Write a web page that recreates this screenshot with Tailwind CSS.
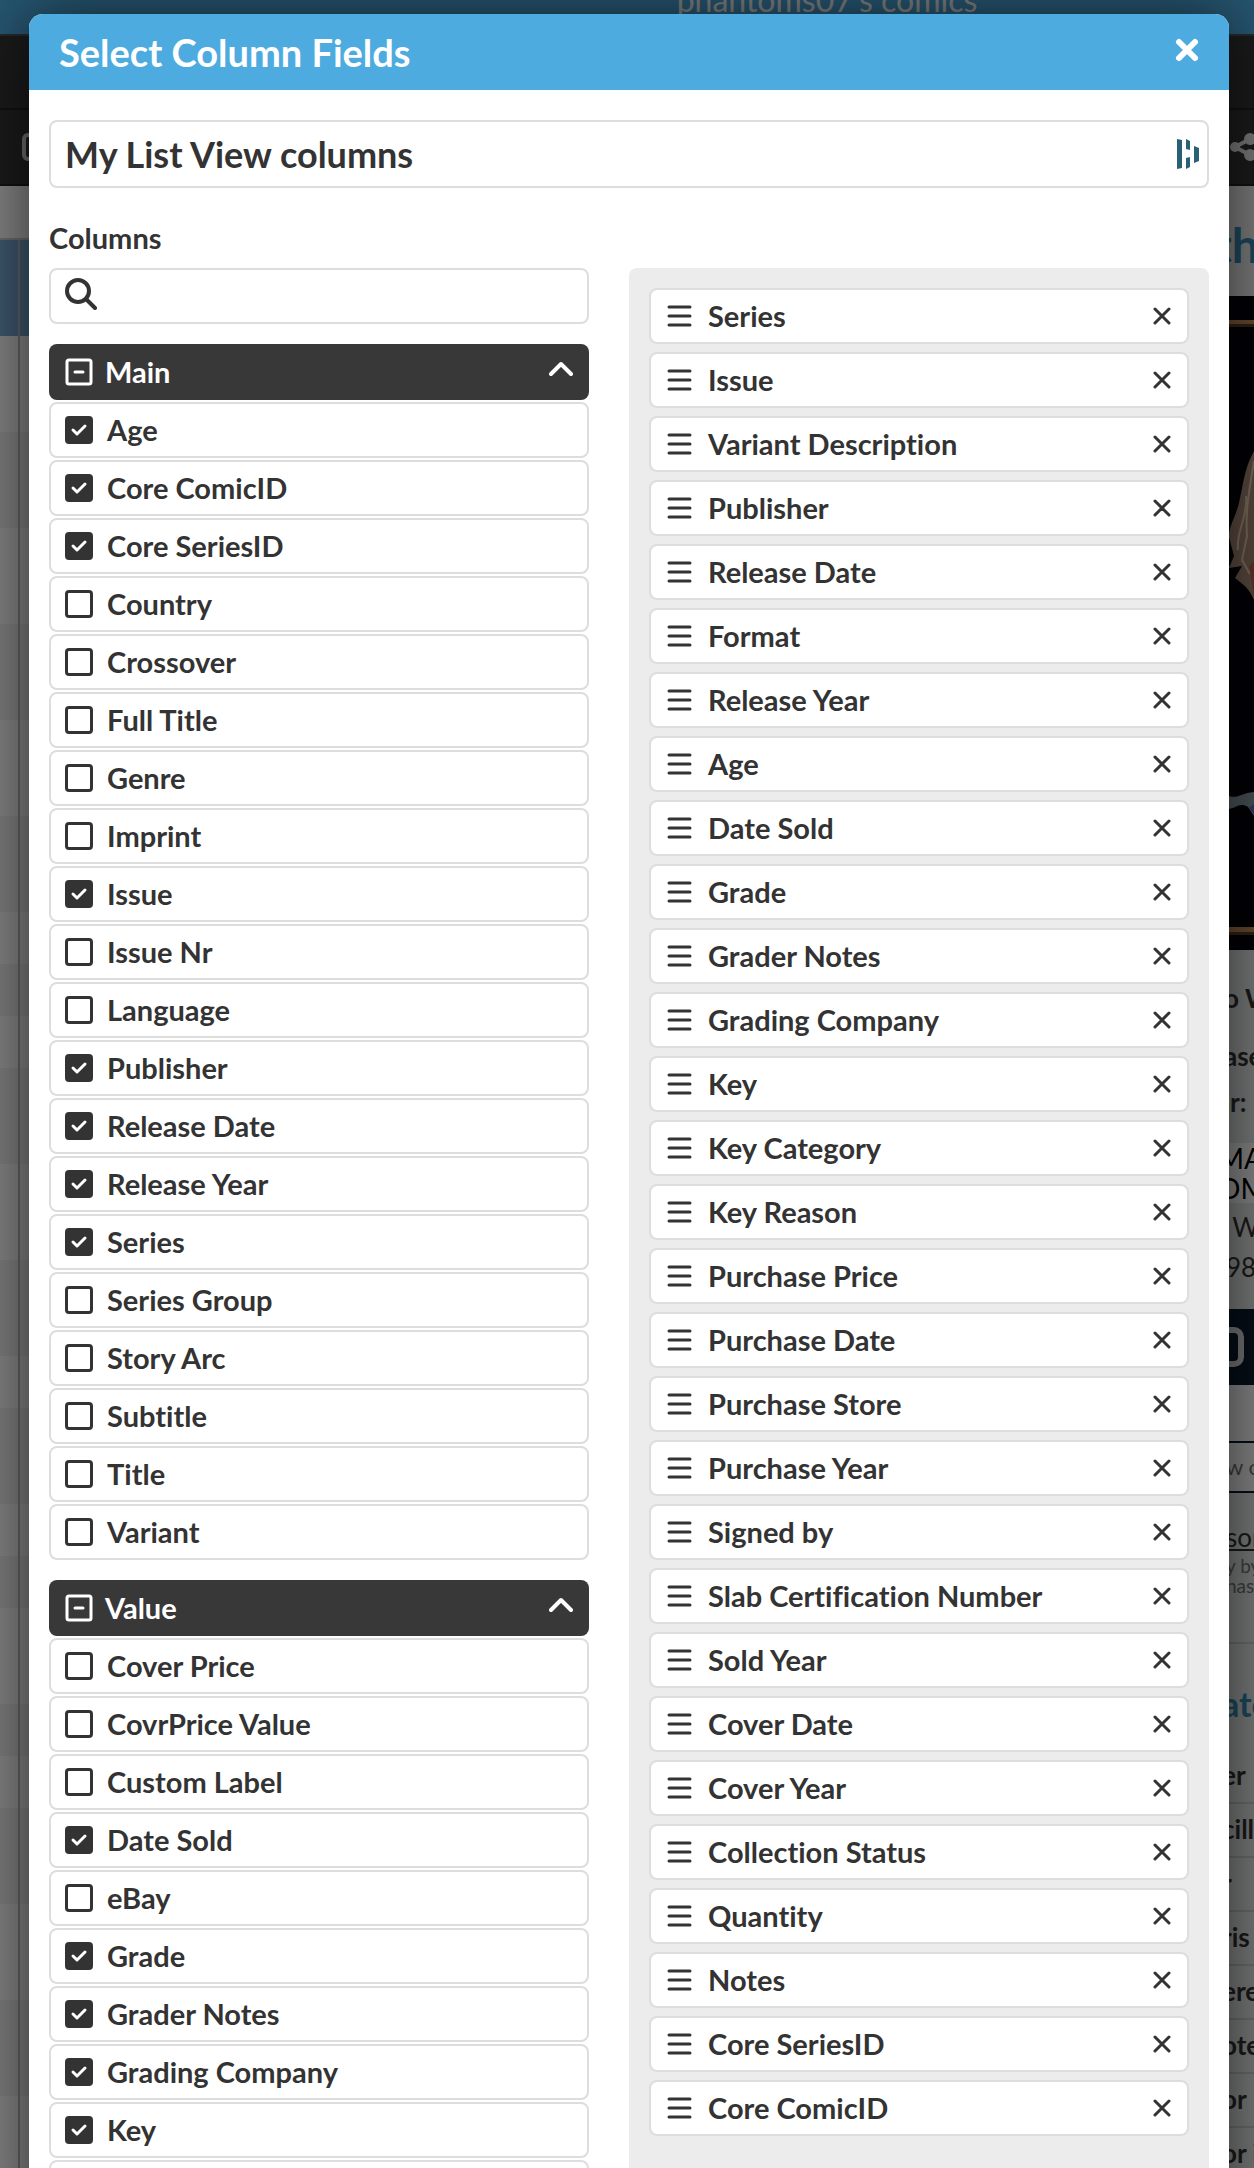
<!DOCTYPE html>
<html lang="en">
  <head>
    <meta charset="UTF-8" />
    <meta name="viewport" content="width=device-width, initial-scale=1.0" />
    <title>Select Column Fields</title>
    <script src="https://cdn.jsdelivr.net/npm/@tailwindcss/browser@4"></script>
  </head>
  <body class="bg-white font-['Lato','Open_Sans',sans-serif] text-[#333] [font-variant-ligatures:none]">
    <div class="relative h-screen overflow-hidden">
      <!-- Page behind the dialog -->
      <div class="flex h-full flex-col" aria-hidden="true">
        <div class="flex h-[34px] shrink-0 items-end justify-center bg-[#4dabe0] pb-[18px]">
          <span class="pl-[400px] text-[32px] leading-none text-white">phantoms07's comics</span>
        </div>
        <div class="h-[76px] shrink-0 border-y-2 border-t-[#505050] border-b-[#202020] bg-[#343434]"></div>
        <div class="flex h-[76px] shrink-0 items-center justify-between border-b-2 border-[#202020] bg-[#343434] pl-[22px]">
          <svg class="h-7 w-7" viewBox="0 0 28 28" fill="none" stroke="#d0d0d0" stroke-width="4">
            <rect x="2" y="2" width="24" height="24" rx="4" />
          </svg>
          <svg class="h-7 w-[26px]" viewBox="0 0 26 28" fill="#e8e8e8" stroke="#e8e8e8" stroke-width="4">
            <circle cx="7" cy="14" r="3" />
            <circle cx="22" cy="6" r="4" />
            <circle cx="22" cy="22" r="4" />
            <path d="M22 6 7 14l15 8" fill="none" />
          </svg>
        </div>
        <div class="flex min-h-0 grow justify-between">
          <div class="flex w-[60px] flex-col">
            <div class="h-[54px] shrink-0 border-b-2 border-[#ccc]"></div>
            <div id="comicRows" class="flex grow"></div>
          </div>
          <div class="flex w-10 flex-col overflow-hidden whitespace-nowrap bg-[#e6e8e8] text-[26px] font-bold">
            <div class="flex h-[110px] shrink-0 items-center bg-[#eee] pt-2 text-[48px] text-[#358cb5]">th</div>
            <svg class="h-[654px] w-10 shrink-0" viewBox="0 0 40 654">
              <rect width="40" height="654" fill="#04050c" />
              <path d="M0 24h40v4H0z" fill="#c08a58" />
              <path d="M0 28h40v3H0z" fill="#5a3e26" />
              <path d="M40 155c-10 18-11 35-15 52-4 16-10 22-10 34l5 19-5 12 13-2-7 12c10 8 14 10 19 22z" fill="#a88a76" />
              <path d="M40 165c-4 25-9 50-7 75l-5 24 8 14M32 200c2 22-10 34-8 54" fill="none" stroke="#e8ccb0" stroke-width="2" />
              <path d="M35 270l5-5v35z" fill="#b0664c" />
              <path d="M15 500c9 3 12-3 25-4v24l-6-9c-8-5-12 1-19 2z" fill="#8a9aa2" />
              <path d="M35 512l5-4v10z" fill="#5c68b8" />
              <path d="M0 631h40v5H0z" fill="#c08a58" />
              <path d="M0 636h40v3H0z" fill="#5a3e26" />
            </svg>
            <div class="h-[66px] shrink-0 pt-8 pl-[10px] leading-8">o W</div>
            <div class="h-[54px] shrink-0 pt-6 pl-[10px] leading-8">ase</div>
            <div class="h-[73px] shrink-0 pt-4 pl-4 leading-8">r:</div>
            <div class="h-[60px] shrink-0 bg-white pl-1 text-[28px] leading-[30px] font-normal text-black">MA<br />OM</div>
            <div class="h-[106px] shrink-0 pt-1 pl-3 leading-[40px] font-normal">&nbsp;W<br />98</div>
            <div class="flex h-[76px] shrink-0 items-center bg-[#0a1a2c]">
              <span class="h-10 w-[30px] rounded-[10px] border-[6px] border-[#ddd]"></span>
            </div>
            <div class="h-14 shrink-0 bg-white"></div>
            <div class="h-[52px] shrink-0 border-y-2 border-[#0a1a2c] bg-white pl-3 text-[22px] leading-[48px] font-normal text-[#777]">w c</div>
            <div class="h-[63px] shrink-0 pt-7 pl-3 leading-8 font-normal underline">son</div>
            <div class="h-[88px] shrink-0 border-b-2 border-[#ccc] pl-3 text-[19px] leading-5 font-normal text-[#777]">y by<br />has</div>
            <div class="flex h-[106px] shrink-0 items-center pt-3 pl-2 text-[34px] text-[#358cb5]">ate</div>
            <div id="detailRows"></div>
          </div>
        </div>
      </div>

      <!-- Dialog -->
      <div class="absolute inset-0 overflow-hidden bg-black/50 pt-[14px] pr-[25px] pl-[29px]">
        <div
          role="dialog"
          aria-labelledby="dialogTitle"
          class="rounded-t-[14px] bg-white shadow-[0_0_60px_rgba(0,0,0,0.6)]"
        >
          <header class="flex h-[76px] items-center justify-between rounded-t-[14px] bg-[#4dabe0] pr-6 pl-[30px] text-white">
            <h1 id="dialogTitle" class="text-[38px] font-bold">Select Column Fields</h1>
            <button type="button" aria-label="Close" class="p-1 pb-2">
              <svg class="h-8 w-7" viewBox="0 0 28 32" fill="none" stroke="currentColor" stroke-width="6" stroke-linecap="round">
                <path d="M6 8l16 16M22 8 6 24" />
              </svg>
            </button>
          </header>

          <div class="px-5 pt-[30px]">
            <div class="flex h-[68px] items-center rounded-lg border-2 border-[#ddd] pr-2">
              <input
                type="text"
                aria-label="Name"
                value="My List View columns"
                class="h-full min-w-0 grow px-[14px] text-[36px] font-bold outline-none"
              />
              <svg class="h-[30px] w-[22px]" viewBox="0 0 22 30" fill="#2a6074">
                <path d="M0 0l5 1v28l-5 1zM9 0l4 2v9l-4-1zM9 19l4-1v10l-4 2zM17 7l5 2v13l-5 2z" />
              </svg>
            </div>

            <h2 class="mt-8 mb-3 text-[29px] leading-9 font-bold">Columns</h2>

            <div class="grid grid-cols-[540fr_580fr] items-start gap-10">
              <div class="flex flex-col gap-5">
                <label class="flex h-14 items-center rounded-lg border-2 border-[#ddd] pr-2 pb-1 pl-[14px]">
                  <svg class="h-8 w-8 shrink-0" viewBox="0 0 32 32" fill="none" stroke="currentColor" stroke-width="4" stroke-linecap="round">
                    <circle cx="13" cy="13" r="11" />
                    <path d="M21 21l9 9" />
                  </svg>
                  <input type="text" id="search" aria-label="Search columns" class="ml-3 min-w-0 grow text-[29px] outline-none" />
                </label>
                <div id="groups" class="flex flex-col gap-5"></div>
              </div>

              <ul id="selected" class="flex flex-col gap-2 rounded-lg bg-[#ececec] p-5 pb-20"></ul>
            </div>
          </div>
        </div>
      </div>
    </div>

    <script>
      const groups = [
        {
          name: "Main",
          fields: ["Age", "Core ComicID", "Core SeriesID", "Country", "Crossover", "Full Title", "Genre", "Imprint", "Issue", "Issue Nr", "Language", "Publisher", "Release Date", "Release Year", "Series", "Series Group", "Story Arc", "Subtitle", "Title", "Variant"],
        },
        {
          name: "Value",
          fields: ["Cover Price", "CovrPrice Value", "Custom Label", "Date Sold", "eBay", "Grade", "Grader Notes", "Grading Company", "Key", "Key Category"],
        },
      ];

      const selected = ["Series", "Issue", "Variant Description", "Publisher", "Release Date", "Format", "Release Year", "Age", "Date Sold", "Grade", "Grader Notes", "Grading Company", "Key", "Key Category", "Key Reason", "Purchase Price", "Purchase Date", "Purchase Store", "Purchase Year", "Signed by", "Slab Certification Number", "Sold Year", "Cover Date", "Cover Year", "Collection Status", "Quantity", "Notes", "Core SeriesID", "Core ComicID"];

      const fieldRow = (field) => `
        <label class="flex h-14 items-center gap-[14px] rounded-lg border-2 border-[#ddd] px-[14px] text-[29px] font-bold">
          <span class="grid">
            <input type="checkbox" ${selected.includes(field) ? "checked" : ""}
              class="peer h-7 w-7 appearance-none rounded-[4px] border-3 border-[#333] [grid-area:1/1] checked:bg-[#333]" />
            <svg class="pointer-events-none hidden h-7 w-7 [grid-area:1/1] peer-checked:block" viewBox="0 0 28 28"
              fill="none" stroke="#fff" stroke-width="3" stroke-linecap="round" stroke-linejoin="round">
              <path d="M8 14l4 4 8-8" />
            </svg>
          </span>
          ${field}
        </label>`;

      document.getElementById("groups").innerHTML = groups
        .map(
          (group) => `
        <section class="flex flex-col gap-[2px]">
          <button type="button" aria-expanded="true"
            class="flex h-14 items-center gap-3 rounded-lg bg-[#383838] px-4 text-[29px] font-bold text-white">
            <svg class="h-7 w-7" viewBox="0 0 28 28" fill="none" stroke="currentColor" stroke-width="3" stroke-linecap="round">
              <rect x="2" y="2" width="24" height="24" rx="2" />
              <path d="M10 14h8" />
            </svg>
            ${group.name}
            <svg class="ml-auto h-7 w-6" viewBox="0 0 24 28" fill="none" stroke="currentColor" stroke-width="4" stroke-linecap="round" stroke-linejoin="round">
              <path d="M2 16 12 6l10 10" />
            </svg>
          </button>
          ${group.fields.map(fieldRow).join("")}
        </section>`
        )
        .join("");

      document.getElementById("selected").innerHTML = selected
        .map(
          (field) => `
        <li class="flex h-14 items-center gap-4 rounded-lg border-2 border-[#ddd] bg-white px-4 text-[29px] font-bold">
          <svg class="h-7 w-[25px]" viewBox="0 0 25 28" fill="none" stroke="currentColor" stroke-width="3" stroke-linecap="round">
            <path d="M2 5h21M2 14h21M2 23h21" />
          </svg>
          ${field}
          <button type="button" aria-label="Remove ${field}" class="ml-auto">
            <svg class="h-[18px] w-[18px]" viewBox="0 0 18 18" fill="none" stroke="currentColor" stroke-width="3" stroke-linecap="round">
              <path d="M2 2l14 14M16 2 2 16" />
            </svg>
          </button>
        </li>`
        )
        .join("");

      // comic rows: one line of text is 52px high, two lines 96px
      const rowHeights = [96, 96, 96, 96, 96, 96, 96, 52, 52, 52, 96, 96, 96, 52, 96, 52, 52, 96, 52, 52, 96, 96, 96];
      const column = rowHeights
        .map((height, i) => {
          const color = i === 0 ? "bg-[#76a9d2]" : i % 2 ? "bg-white" : "bg-[#f2f2f2]";
          return `<div class="shrink-0 ${color}" style="height: ${height}px"></div>`;
        })
        .join("");
      document.getElementById("comicRows").innerHTML = `
        <div class="w-5 border-r-2 border-[#bbb]">${column}</div>
        <div class="grow">${column}</div>`;

      document.getElementById("detailRows").innerHTML = ["er", "cille", "r", "ris", "ere", "ote", "or", "or i"]
        .map((text) => `<div class="h-[54px] border-b-2 border-[#ccc] pl-2 leading-[50px]">${text}</div>`)
        .join("");
    </script>
  </body>
</html>
